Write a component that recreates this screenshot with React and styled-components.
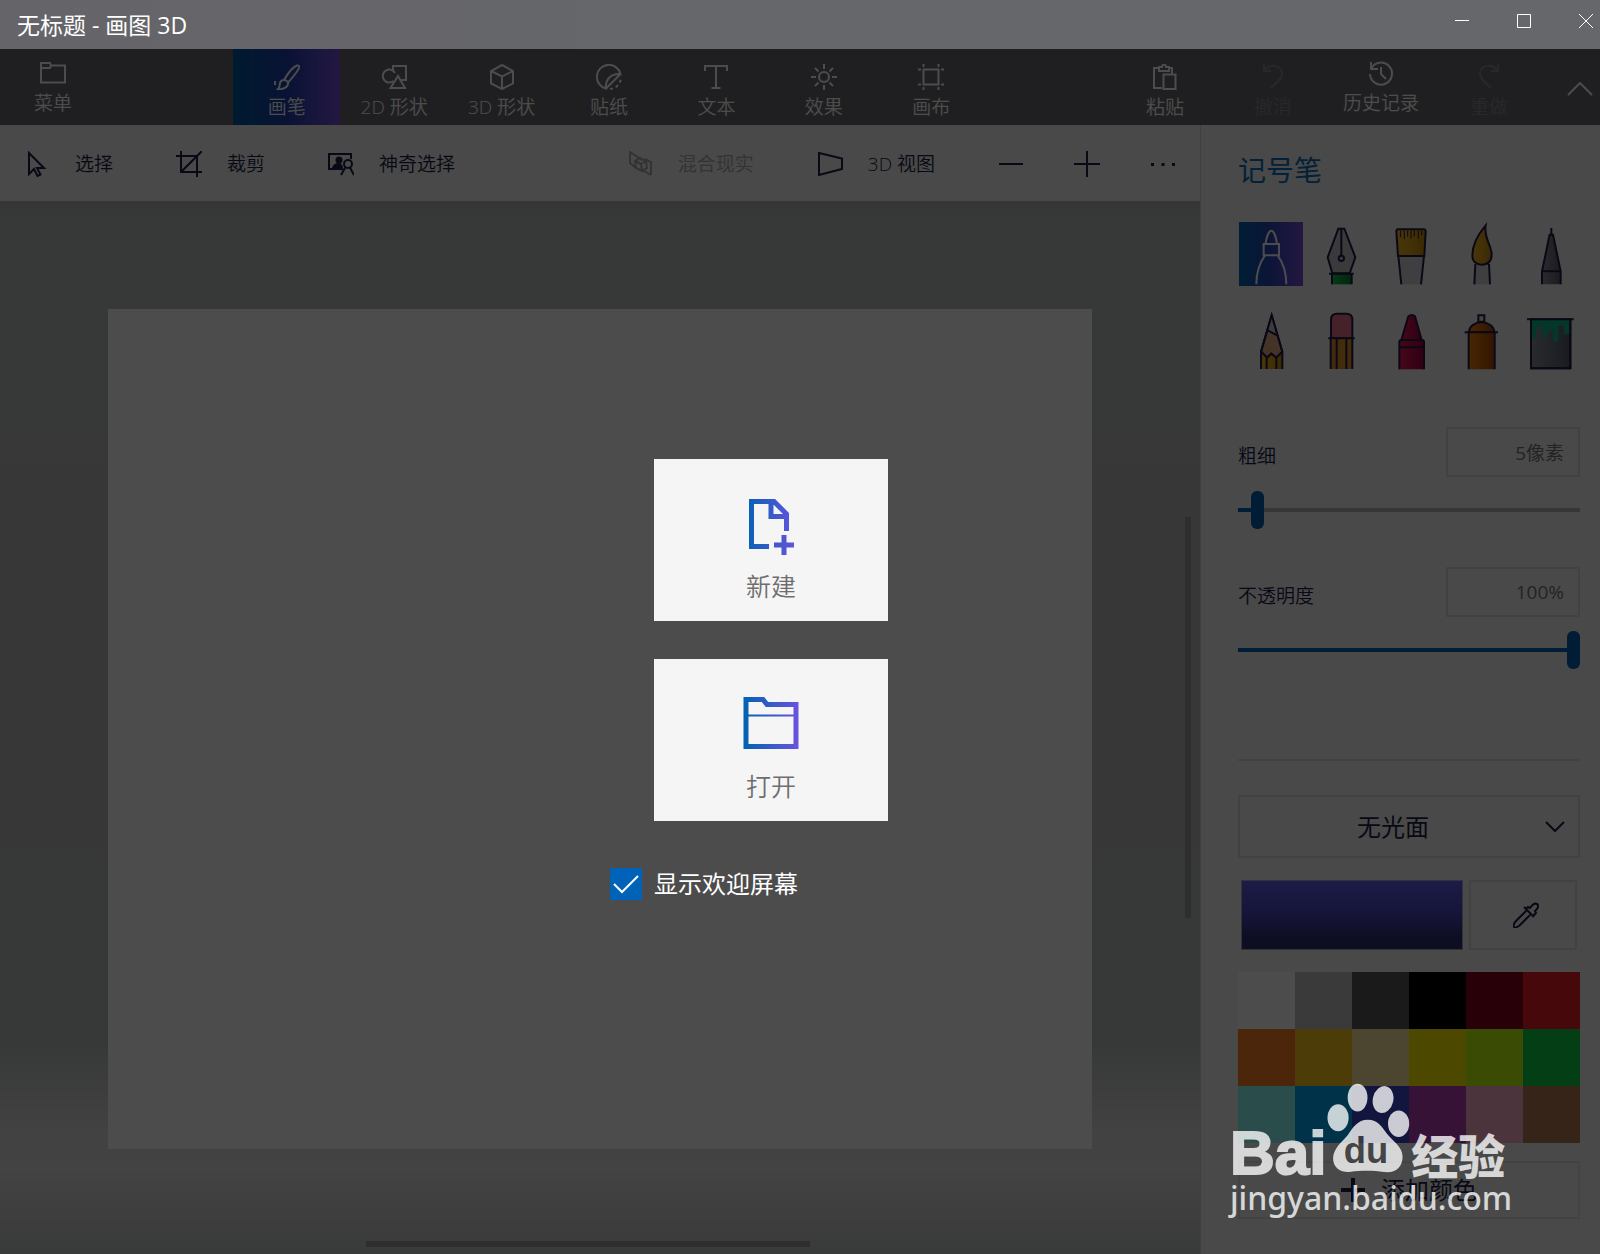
import { useState } from "react";
import styled, { createGlobalStyle } from "styled-components";

const GlobalStyle = createGlobalStyle`
  * {
    box-sizing: border-box;
  }
  body {
    margin: 0;
    font-family: "Open Sans", "Noto Sans CJK SC", sans-serif;
  }
  button,
  input,
  select {
    font-family: inherit;
    margin: 0;
    padding: 0;
    border: none;
    background: none;
    color: inherit;
  }
  svg {
    display: block;
    flex: none;
  }
`;

const Window = styled.div`
  display: flex;
  flex-direction: column;
  min-height: 100vh;
`;

const TitleBar = styled.header`
  display: flex;
  justify-content: space-between;
  height: 49px;
  padding: 0 7px 0 17px;
  background: linear-gradient(90deg, #646469, #66676b 60%, #65676b);
  color: #ffffff;
  h1 {
    margin: 0;
    font-weight: 400;
    font-size: 23px;
    line-height: 50px;
  }
`;

const WindowButtons = styled.div`
  display: flex;
  align-items: center;
  gap: 48px;
  height: 42px;
  button {
    width: 14px;
    height: 14px;
  }
`;

const Stage = styled.div`
  position: relative;
  display: flex;
  flex-direction: column;
  flex: 1;
`;

const Ribbon = styled.nav`
  display: flex;
  height: 76px;
  background: #696a6e;
  color: #ffffff;
`;

const RibbonGroup = styled.div`
  display: grid;
  grid-template-columns: repeat(${props => props.count}, 1fr);
  width: ${props => props.width};
  margin-left: ${props => props.space};
`;

const RibbonButton = styled.button`
  display: flex;
  flex-direction: column;
  align-items: center;
  gap: 4px;
  min-width: 106px;
  height: 76px;
  padding-top: ${props => (props.$raised ? "11px" : "15px")};
  font-size: 19px;
  line-height: 26px;
  font-weight: 350;
  white-space: nowrap;
  color: ${props => (props.disabled ? "#85878b" : "#ffffff")};
  background: ${props =>
    props.$active
      ? "linear-gradient(90deg, #005a9e, #1d3fae 50%, #7a50dc)"
      : "none"};
`;

const CollapseButton = styled.button`
  display: flex;
  align-items: center;
  justify-content: flex-end;
  width: 57px;
  padding-top: 4px;
  padding-right: 7px;
`;

const Body = styled.div`
  display: flex;
  flex: 1;
`;

const Main = styled.div`
  display: flex;
  flex-direction: column;
  flex: 1;
`;

const Toolbar = styled.div`
  display: flex;
  align-items: center;
  justify-content: space-between;
  height: 76px;
  padding: 2px 24px 0;
  background: #f0f3f1;
`;

const ToolGroup = styled.div`
  display: flex;
  align-items: center;
  gap: ${props => props.gap};
`;

const ToolButton = styled.button`
  display: flex;
  align-items: center;
  gap: 25px;
  font-size: 19px;
  line-height: 26px;
  font-weight: 350;
  white-space: nowrap;
  color: ${props => (props.disabled ? "#a9abac" : "#1e1e4c")};
`;

const Workspace = styled.main`
  position: relative;
  display: flex;
  flex: 1;
  padding: 108px 108px 106px;
  background: linear-gradient(
    180deg,
    #b2b2b2,
    #b8bdbb 2%,
    #b8bdbb 18%,
    #bababa 27%,
    #bababa 60%,
    #b8bdbb 64%,
    #b8bdbb 80%,
    #dcdcdc 88%,
    #dfdfdf 92%,
    #bfc2c1
  );
`;

const Paper = styled.div`
  flex: 1;
  background: #ffffff;
`;

const VerticalThumb = styled.div`
  position: absolute;
  top: 30%;
  right: 9px;
  width: 6px;
  height: 38%;
  background: #999999;
`;

const HorizontalThumb = styled.div`
  position: absolute;
  left: 0;
  right: 24px;
  bottom: 8px;
  width: 37%;
  height: 6px;
  margin: 0 auto;
  background: #999999;
`;

const Panel = styled.aside`
  width: 25%;
  min-width: 360px;
  padding: 25px 20px 36px 37px;
  border-left: 1px solid #d8d8d8;
  background: #f3f3f3;
  color: #1e1e4c;
  h2 {
    margin: 0;
    font-weight: 400;
    font-size: 28px;
    line-height: 40px;
    color: #0a70bc;
  }
  hr {
    height: 2px;
    margin: 90px 0 34px;
    border: none;
    background: #dddddd;
  }
`;

const BrushGrid = styled.div`
  display: grid;
  grid-template-columns: repeat(5, 64px);
  gap: 21px 6px;
  margin: 32px 0 56px;
  padding-left: 1px;
`;

const BrushButton = styled.button`
  height: 64px;
  background: ${props =>
    props.$active
      ? "linear-gradient(90deg, #0063b1, #2b46b8 50%, #7850dc)"
      : "none"};
`;

const Field = styled.div`
  margin-top: 38px;
`;

const FieldRow = styled.div`
  display: flex;
  align-items: center;
  justify-content: space-between;
  height: 50px;
  margin-bottom: 14px;
  label {
    padding-top: 8px;
    font-size: 19px;
    line-height: 26px;
    font-weight: 350;
  }
`;

const ValueBox = styled.input`
  width: 134px;
  height: 50px;
  padding: 0 14px;
  border: 2px solid #dcdcdc;
  background: #f6f6f6;
  font-size: 19px;
  line-height: 26px;
  text-align: right;
  color: #777777;
`;

const Slider = styled.input`
  display: block;
  appearance: none;
  width: 100%;
  height: 38px;
  &::-webkit-slider-runnable-track {
    height: 4px;
    background: linear-gradient(
      90deg,
      #0063b1 var(--filled),
      #b4b4b4 var(--filled)
    );
  }
  &::-webkit-slider-thumb {
    appearance: none;
    width: 13px;
    height: 38px;
    margin-top: -17px;
    border-radius: 6px;
    background: #0063b1;
  }
`;

const SelectBox = styled.div`
  position: relative;
  select {
    appearance: none;
    width: 100%;
    height: 63px;
    padding-right: 32px;
    border: 2px solid #dcdcdc;
    font-size: 24px;
    text-align: center;
    text-align-last: center;
  }
  svg {
    position: absolute;
    top: 26px;
    right: 15px;
    pointer-events: none;
  }
`;

const ColorRow = styled.div`
  display: flex;
  gap: 6px;
  height: 70px;
  margin: 22px 3px;
`;

const CurrentColor = styled.button`
  flex: 1;
  border: 1px solid #a8a8bc;
  background: linear-gradient(180deg, #605cec, #4a48c4 45%, #2f2f72 85%);
`;

const PickerButton = styled.button`
  display: flex;
  align-items: center;
  justify-content: center;
  width: 108px;
  padding-left: 6px;
  border: 2px solid #dedede;
`;

const Palette = styled.div`
  display: grid;
  grid-template-columns: repeat(6, 1fr);
`;

const ColorCell = styled.button`
  height: 57px;
  background: ${props => props.color};
`;

const AddColorButton = styled.button`
  display: flex;
  align-items: center;
  justify-content: center;
  gap: 16px;
  width: 100%;
  height: 58px;
  margin-top: 18px;
  border: 2px solid #e2e2e2;
  font-size: 24px;
  line-height: 32px;
`;

const Overlay = styled.div`
  position: absolute;
  inset: 0;
  display: flex;
  align-items: flex-start;
  justify-content: center;
  padding-top: 410px;
  background: rgba(0, 0, 0, 0.7);
`;

const Welcome = styled.section`
  display: grid;
  grid-template-columns: 32px 234px;
  column-gap: 12px;
  row-gap: 38px;
  width: 380px;
`;

const WelcomeCard = styled.button`
  grid-column: 2;
  display: flex;
  flex-direction: column;
  align-items: center;
  justify-content: flex-end;
  gap: 13px;
  height: 162px;
  padding-bottom: 18px;
  background: #f5f5f5;
  font-size: 25px;
  line-height: 34px;
  font-weight: 350;
  color: #6e6e6e;
`;

const CheckLabel = styled.label`
  grid-column: 1 / -1;
  display: flex;
  align-items: center;
  gap: 12px;
  margin-top: 9px;
  font-size: 24px;
  line-height: 32px;
  color: #ffffff;
`;

const CheckBox = styled.span`
  position: relative;
  width: 32px;
  height: 32px;
  input {
    display: block;
    appearance: none;
    width: 32px;
    height: 32px;
    border: 2px solid #ffffff;
  }
  input:checked {
    border: none;
    background: #0063b8;
  }
  input:not(:checked) + svg {
    display: none;
  }
  svg {
    position: absolute;
    inset: 0;
    pointer-events: none;
  }
`;

const Watermark = styled.div`
  position: absolute;
  right: 88px;
  bottom: 43px;
  color: #ffffff;
  opacity: 0.78;
  pointer-events: none;
  div {
    display: flex;
    align-items: baseline;
    font-family: "Liberation Sans", "Noto Sans CJK SC", sans-serif;
    font-weight: 700;
    font-size: 62px;
    line-height: 62px;
    -webkit-text-stroke: 2px #ffffff;
  }
  svg {
    -webkit-text-stroke: 0;
  }
  strong {
    font-weight: 900;
    font-size: 47px;
    line-height: 47px;
    -webkit-text-stroke: 0;
  }
  p {
    margin: 0;
    font-family: "Noto Sans", sans-serif;
    font-weight: 500;
    font-size: 32px;
    line-height: 28px;
  }
`;

const Line = ({ width = 26, height = 26, weight = 2, box, children }) => (
  <svg
    width={width}
    height={height}
    viewBox={box || `0 0 ${width} ${height}`}
    fill="none"
    stroke="currentColor"
    strokeWidth={weight}
    aria-hidden="true"
  >
    {children}
  </svg>
);

const icons = {
  menu: (
    <Line>
      <path d="M1 5.500v17h24V5.500H11L10 3H1v5h9l1-2.500" />
    </Line>
  ),
  brush: (
    <Line>
      <path d="M10 16C14 9 19 3 23 1.500c2-.500 2.500 1 2 2.500-1.500 4-7 10-11 14.500M10 16c2 0 4 1.500 4 3.500C14 23 9 26 4 25c2-1.500 1.500-4 2-6 .500-2 2-3 4-3zM1 17v4" />
    </Line>
  ),
  shapes2d: (
    <Line>
      <path d="M12 6V2h13v14h-5" />
      <path d="M12.500 17A6.500 6.500 0 1 1 14 9" />
      <path d="M17 12l7 12H9.500z" />
    </Line>
  ),
  shapes3d: (
    <Line>
      <path d="M13 1l11 6v12.500l-11 5.500-11-5.500V7zM2 7l11 5.500L24 7M13 12.500V25" />
    </Line>
  ),
  sticker: (
    <Line>
      <path d="M10 24.500A12 12 0 1 1 24.500 10C16 9 9 15 10 24.500zM10 24.500L24.500 10" />
      <path d="M14 25a12 12 0 0 0 11-11" strokeDasharray="3 3" />
    </Line>
  ),
  text: (
    <Line>
      <path d="M2 7V2h22v5M13 2v22M8.500 24h9" />
    </Line>
  ),
  effects: (
    <Line>
      <circle cx="13" cy="13" r="5" />
      <path d="M13 0v5M13 21v5M0 13h5M21 13h5M4 4l3.500 3.500M18.500 18.500L22 22M4 22l3.500-3.500M18.500 7.500L22 4" />
    </Line>
  ),
  canvas: (
    <Line>
      <path d="M5.500 5.500h15v15h-15zM5.500 0v3M20.500 0v3M5.500 23v3M20.500 23v3M0 5.500h3M23 5.500h3M0 20.500h3M23 20.500h3" />
    </Line>
  ),
  paste: (
    <Line>
      <path d="M10 24H2V4h5M16 4h4v6M7 7V3h3c0-3 4-3 4 0h3v4zM11.500 10.500h12V25h-12z" />
    </Line>
  ),
  undo: (
    <Line>
      <path d="M4 0v7h7M4 7C9 0 20 0 22 8c1 6-5 10-11 16" />
    </Line>
  ),
  history: (
    <Line>
      <path d="M3 2v7h7M3 9a11 11 0 1 1-1 5M13 7v7l5 5" />
    </Line>
  ),
  redo: (
    <Line>
      <path d="M22 0v7h-7M22 7C17 0 6 0 4 8c-1 6 5 10 11 16" />
    </Line>
  ),
  select: (
    <Line>
      <path d="M5 2v21l5-5 3.500 7 3-1.500L13 17h7z" />
    </Line>
  ),
  crop: (
    <Line>
      <path d="M0 5h21v21M5 0v21h21M5 21L26 0" />
    </Line>
  ),
  magic: (
    <Line>
      <path d="M15 18H1V3h22v5" />
      <circle cx="11" cy="9" r="3.500" fill="currentColor" stroke="none" />
      <path
        d="M4 17c1-4 4-5 7-5 2 0 4 2 4 5z"
        fill="currentColor"
        stroke="none"
      />
      <circle cx="20" cy="13" r="4" />
      <path d="M17.500 16L13 24M22 16.500l4 7.500" />
    </Line>
  ),
  mixed: (
    <Line>
      <path d="M8 16l-5-4V1l12 8M24 24V11l-6-3M24 24l-9-5M3 12l6 5" />
      <path d="M8 10l5-3 6 3 1 7-5 3-6-3zM8 10l6 3 5-3M14 13l1 7" />
    </Line>
  ),
  view3d: (
    <Line>
      <path d="M2 2l23 5.500V18L2 24z" />
    </Line>
  ),
  minus: (
    <Line>
      <path d="M1 13h24" />
    </Line>
  ),
  plus: (
    <Line>
      <path d="M0 13h26M13 0v26" />
    </Line>
  ),
  more: (
    <Line>
      <path
        d="M1 12h3v3H1zM11.500 12h3v3h-3zM22 12h3v3h-3z"
        fill="currentColor"
        stroke="none"
      />
    </Line>
  ),
};

const ink = "#251c48";

const brushes = [
  {
    name: "记号笔",
    drawing: (
      <g stroke="#ffffff">
        <path d="M80 64c2-20 10-38 17-38s14 18 17 38M74 66h46v34H74zM78 100C62 122 52 150 52 187M116 100c16 22 26 50 26 87" />
      </g>
    ),
  },
  {
    name: "书法笔",
    drawing: (
      <g>
        <path fill="url(#green)" d="M68 155h60v32H68z" stroke="none" />
        <path fill="#c4c4ce" d="M88 20h18l33 86-17 48H70l-14-48z" />
        <path d="M97 20v80M60 155h74M69 155v32M128 155v32" />
        <circle cx="97" cy="109" r="8" />
      </g>
    ),
  },
  {
    name: "油画笔",
    drawing: (
      <g>
        <path fill="#d4d4de" d="M58 102l9 85h59l9-85z" stroke="none" />
        <path fill="url(#gold)" d="M52 28q0-6 6-6h76q6 0 6 6l-4 74H57z" />
        <path d="M58 102l9 85M135 102l-9 85" />
        <path
          d="M65 26v20M76 26v26M86 26v18M96 26v24M106 26v18M118 26v24M128 26v14"
          strokeWidth="3"
        />
      </g>
    ),
  },
  {
    name: "水彩笔",
    drawing: (
      <g>
        <path fill="#d4d4de" d="M79 126l-3 61h47l-3-61z" stroke="none" />
        <path d="M79 126l-3 61M120 126l3 61" />
        <path
          fill="url(#gold)"
          d="M110 10C88 36 70 68 70 100c0 20 14 28 28 28 18 0 30-10 30-32-2-30-24-48-18-86z"
        />
      </g>
    ),
  },
  {
    name: "像素笔",
    drawing: (
      <g>
        <path fill="url(#steel)" d="M92 38h10l23 110v39H69v-39z" stroke="none" />
        <path d="M97 18v20M69 187v-39L92 38h10l23 110v39M69 148h56" />
      </g>
    ),
  },
  {
    name: "铅笔",
    drawing: (
      <g>
        <path fill="#e4ae86" d="M98 25l32 109-18 18-15-12-13 12-18-18z" />
        <path fill="#c8c8d6" d="M98 25L87 70l24 12z" stroke="none" />
        <path
          fill="url(#gold)"
          d="M66 134l18 18 13-12 15 12 18-18v52H66z"
          stroke="none"
        />
        <path d="M66 186v-52L98 25l32 109v52M86 70l26 14M66 134l18 18 13-12 15 12 18-18M83 152v34M112 152v34" />
      </g>
    ),
  },
  {
    name: "橡皮擦",
    drawing: (
      <g>
        <path fill="#e8708c" d="M66 94V38q0-18 18-18h28q18 0 18 18v56z" />
        <path fill="#e09428" d="M65 94h65v92H65z" stroke="none" />
        <path d="M58 94h79M65 94v92M83 94v92M112 94v92M130 94v92" />
      </g>
    ),
  },
  {
    name: "蜡笔",
    drawing: (
      <g>
        <path fill="url(#rose)" d="M88 28q10-8 20 0l20 71H67z" />
        <path
          fill="url(#rose)"
          d="M61 187v-82q0-6 6-6h62q6 0 6 6v82z"
          stroke="none"
        />
        <path d="M61 187v-82q0-6 6-6h62q6 0 6 6v82M61 121h74" />
      </g>
    ),
  },
  {
    name: "喷枪",
    drawing: (
      <g>
        <path fill="#e8e8e8" d="M88 25h18v19H88z" />
        <path fill="url(#orange)" d="M60 76c0-20 20-30 37-30s39 10 39 30z" />
        <path fill="url(#orange)" d="M59 76h78v111H59z" stroke="none" />
        <path d="M47 76h100M59 76v111M137 76v111" />
      </g>
    ),
  },
  {
    name: "填充",
    drawing: (
      <g>
        <path fill="url(#steel)" d="M36 37h118v147H36z" />
        <path
          fill="#10b48c"
          stroke="none"
          d="M38 38h114v40c-4 6-16 6-18-2V64c-2-12-14-12-16-2v36c-2 10-14 10-16 0V80c-2-12-14-14-16-2v8c-2 8-14 8-16 0V66c-2-10-16-10-18 2v20c-4 8-10 10-14 4z"
        />
        <path d="M24 37h140M36 37v147h118V37" />
      </g>
    ),
  },
];

const gradients = {
  green: ["#18c458", "#00802c"],
  gold: ["#f4b824", "#c88a10"],
  steel: ["#8c909a", "#585a6c"],
  rose: ["#e81858", "#a0003c"],
  orange: ["#f08010", "#a84800"],
};

const palette = [
  "#ffffff", "#c3c3c3", "#585858", "#000000", "#88001b", "#ec1c24",
  "#ff7f27", "#ffca18", "#fdeca6", "#fff200", "#c4ff0e", "#0ed145",
  "#8cfffb", "#00a8f3", "#3f48cc", "#b83dba", "#ffaec8", "#b97a56",
];

const tabs = [
  { icon: "brush", label: "画笔" },
  { icon: "shapes2d", label: "2D 形状" },
  { icon: "shapes3d", label: "3D 形状" },
  { icon: "sticker", label: "贴纸" },
  { icon: "text", label: "文本" },
  { icon: "effects", label: "效果" },
  { icon: "canvas", label: "画布" },
];

const GradientDefs = styled.svg`
  position: absolute;
`;

const Gradients = () => (
  <GradientDefs width="0" height="0" aria-hidden="true">
    <defs>
      {Object.entries(gradients).map(([id, [from, to]]) => (
        <linearGradient id={id} key={id}>
          <stop offset="0" stopColor={from} />
          <stop offset="1" stopColor={to} />
        </linearGradient>
      ))}
      <linearGradient
        id="accent"
        gradientUnits="userSpaceOnUse"
        x1="0"
        x2="56"
        y1="0"
        y2="0"
      >
        <stop offset="0" stopColor="#0063b1" />
        <stop offset="1" stopColor="#6b52e0" />
      </linearGradient>
    </defs>
  </GradientDefs>
);

const SliderField = ({ id, label, unit, min, value, onChange }) => (
  <Field>
    <FieldRow>
      <label htmlFor={id}>{label}</label>
      <ValueBox aria-label={label} value={value + unit} readOnly />
    </FieldRow>
    <Slider
      id={id}
      type="range"
      min={min}
      max="100"
      value={value}
      onChange={e => onChange(Number(e.target.value))}
      style={{ "--filled": ((value - min) / (100 - min)) * 100 + "%" }}
    />
  </Field>
);

const App = () => {
  const [activeTab, setActiveTab] = useState(0);
  const [activeBrush, setActiveBrush] = useState(0);
  const [thickness, setThickness] = useState(5);
  const [opacity, setOpacity] = useState(100);
  const [showWelcome, setShowWelcome] = useState(true);

  return (
    <>
      <GlobalStyle />
      <Gradients />
      <Window>
        <TitleBar>
          <h1>无标题 - 画图 3D</h1>
          <WindowButtons>
            <button aria-label="最小化">
              <Line width={14} height={14} weight={1}>
                <path d="M0 6.500h14" />
              </Line>
            </button>
            <button aria-label="最大化">
              <Line width={14} height={14} weight={1}>
                <path d="M.5.5h13v13H.5z" />
              </Line>
            </button>
            <button aria-label="关闭">
              <Line width={14} height={14} weight={1}>
                <path d="M0 0l14 14M14 0L0 14" />
              </Line>
            </button>
          </WindowButtons>
        </TitleBar>
        <Stage>
          <Ribbon>
            <RibbonButton $raised>
              {icons.menu}
              菜单
            </RibbonButton>
            <RibbonGroup count={7} width="47%" space="127px">
              {tabs.map((item, index) => (
                <RibbonButton
                  key={item.icon}
                  $active={index === activeTab}
                  onClick={() => setActiveTab(index)}
                >
                  {icons[item.icon]}
                  {item.label}
                </RibbonButton>
              ))}
            </RibbonGroup>
            <RibbonGroup count={4} width="27%" space="auto">
              <RibbonButton>
                {icons.paste}
                粘贴
              </RibbonButton>
              <RibbonButton disabled>
                {icons.undo}
                撤消
              </RibbonButton>
              <RibbonButton $raised>
                {icons.history}
                历史记录
              </RibbonButton>
              <RibbonButton disabled>
                {icons.redo}
                重做
              </RibbonButton>
            </RibbonGroup>
            <CollapseButton aria-label="折叠">
              <Line width={26} height={14}>
                <path d="M1 13L13 1l12 12" />
              </Line>
            </CollapseButton>
          </Ribbon>
          <Body>
            <Main>
              <Toolbar>
                <ToolGroup gap="63px">
                  <ToolButton>
                    {icons.select}
                    选择
                  </ToolButton>
                  <ToolButton>
                    {icons.crop}
                    裁剪
                  </ToolButton>
                  <ToolButton>
                    {icons.magic}
                    神奇选择
                  </ToolButton>
                </ToolGroup>
                <ToolGroup gap="63px">
                  <ToolButton disabled>
                    {icons.mixed}
                    混合现实
                  </ToolButton>
                  <ToolButton>
                    {icons.view3d}
                    3D 视图
                  </ToolButton>
                  <ToolGroup gap="50px">
                    <ToolButton aria-label="缩小">{icons.minus}</ToolButton>
                    <ToolButton aria-label="放大">{icons.plus}</ToolButton>
                    <ToolButton aria-label="更多">{icons.more}</ToolButton>
                  </ToolGroup>
                </ToolGroup>
              </Toolbar>
              <Workspace>
                <Paper />
                <VerticalThumb />
                <HorizontalThumb />
              </Workspace>
            </Main>
            <Panel>
              <h2>{brushes[activeBrush].name}</h2>
              <BrushGrid>
                {brushes.map((item, index) => (
                  <BrushButton
                    key={item.name}
                    aria-label={item.name}
                    $active={index === activeBrush}
                    onClick={() => setActiveBrush(index)}
                  >
                    <svg
                      width="64"
                      height="64"
                      viewBox="0 0 192 192"
                      fill="none"
                      stroke={ink}
                      strokeWidth="6"
                    >
                      {item.drawing}
                    </svg>
                  </BrushButton>
                ))}
              </BrushGrid>
              <SliderField
                id="thickness"
                label="粗细"
                unit="像素"
                min={1}
                value={thickness}
                onChange={setThickness}
              />
              <SliderField
                id="opacity"
                label="不透明度"
                unit="%"
                min={0}
                value={opacity}
                onChange={setOpacity}
              />
              <hr />
              <SelectBox>
                <select aria-label="材质" defaultValue="matte">
                  <option value="matte">无光面</option>
                  <option value="gloss">光泽</option>
                </select>
                <Line width={20} height={11}>
                  <path d="M1 1l9 9 9-9" />
                </Line>
              </SelectBox>
              <ColorRow>
                <CurrentColor aria-label="当前颜色" />
                <PickerButton aria-label="取色器">
                  <Line>
                    <path d="M14 8L3 19c-2 2-3 5-2 6s4 0 6-2l11-11M11 5l10 10M13 7l2-2 2 1c2-3 5-5 7-4s1 5-2 7l1 2-3 3" />
                  </Line>
                </PickerButton>
              </ColorRow>
              <Palette>
                {palette.map(item => (
                  <ColorCell key={item} color={item} aria-label={item} />
                ))}
              </Palette>
              <AddColorButton>
                <Line width={24} height={24} weight={4}>
                  <path d="M0 12h24M12 0v24" />
                </Line>
                添加颜色
              </AddColorButton>
            </Panel>
          </Body>
          {/* Welcome screen */}
          <Overlay>
            <Welcome>
              <WelcomeCard>
                <svg
                  width="56"
                  height="60"
                  fill="none"
                  stroke="url(#accent)"
                  strokeWidth="5"
                >
                  <path d="M26 50.500H8.500V5.500H31L43.500 18v17M28 5.500v15h15.500M41 39v20M31 49h20" />
                </svg>
                新建
              </WelcomeCard>
              <WelcomeCard>
                <svg
                  width="56"
                  height="60"
                  fill="none"
                  stroke="url(#accent)"
                  strokeWidth="5"
                >
                  <path d="M3 3.500h17l4 5h29v42H3z" />
                  <path d="M3 19.500h50" strokeWidth="2" />
                </svg>
                打开
              </WelcomeCard>
              <CheckLabel>
                <CheckBox>
                  <input
                    type="checkbox"
                    checked={showWelcome}
                    onChange={() => setShowWelcome(!showWelcome)}
                  />
                  <Line width={32} height={32}>
                    <path d="M4 16l8 8L28 8" />
                  </Line>
                </CheckBox>
                显示欢迎屏幕
              </CheckLabel>
            </Welcome>
          </Overlay>
          <Watermark>
            <div>
              Bai
              <svg
                width="85"
                height="91"
                viewBox="375 370 256 275"
                fill="currentColor"
              >
                <ellipse cx="411" cy="475" rx="32" ry="41" />
                <ellipse cx="470" cy="414" rx="30" ry="42" />
                <ellipse
                  cx="547"
                  cy="420"
                  rx="31"
                  ry="41"
                  transform="rotate(12 547 420)"
                />
                <ellipse cx="594" cy="493" rx="32" ry="40" />
                <path d="M501 481c-31 0-46 24-61 47-20 22-44 42-44 70 0 32 29 44 54 40 30-4 70-4 100 1 40 4 56-19 56-47 0-27-26-44-46-67-15-20-28-44-59-44z" />
                <text x="428" y="612" fontSize="110" fill="#444446">
                  du
                </text>
              </svg>
              <strong>经验</strong>
            </div>
            <p>jingyan.baidu.com</p>
          </Watermark>
        </Stage>
      </Window>
    </>
  );
};

export default App;
